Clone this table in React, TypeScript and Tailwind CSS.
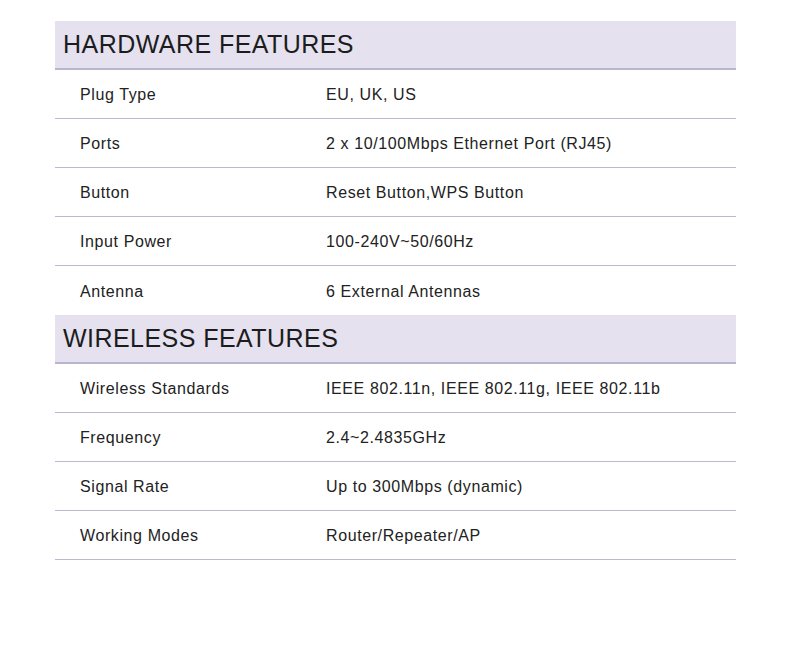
type Row = { label: string; value: string };

const sections: { title: string; rows: Row[] }[] = [
  {
    title: "HARDWARE FEATURES",
    rows: [
      { label: "Plug Type", value: "EU, UK, US" },
      { label: "Ports", value: "2 x 10/100Mbps Ethernet Port (RJ45)" },
      { label: "Button", value: "Reset Button,WPS Button" },
      { label: "Input Power", value: "100-240V~50/60Hz" },
      { label: "Antenna", value: "6 External Antennas" },
    ],
  },
  {
    title: "WIRELESS FEATURES",
    rows: [
      { label: "Wireless Standards", value: "IEEE 802.11n, IEEE 802.11g, IEEE 802.11b" },
      { label: "Frequency", value: "2.4~2.4835GHz" },
      { label: "Signal Rate", value: "Up to 300Mbps (dynamic)" },
      { label: "Working Modes", value: "Router/Repeater/AP" },
    ],
  },
];

export default function App() {
  return (
    <main
      className="min-h-[650px] w-[792px] bg-white pt-[21px] text-[#222]"
      style={{ fontFamily: '"Liberation Sans", Arial, sans-serif' }}
    >
      <div className="ml-[55px] w-[681px]">
        {sections.map((s, si) => (
          <section key={s.title}>
            <div className="flex h-[49px] items-center border-b-2 border-[#b9b5cf] bg-[#e5e1ef] pl-[8px]">
              <h2 className="text-[25px] leading-none tracking-[0.45px] text-[#1c1c1c]">
                {s.title}
              </h2>
            </div>
            {s.rows.map((r, i) => {
              const last = i === s.rows.length - 1;
              const line = !last || si === sections.length - 1;
              return (
                <div
                  key={r.label}
                  className={
                    "flex h-[49px] items-center pt-[2px] text-[16px] tracking-[0.6px] " +
                    (line ? "border-b border-[#bcb8d2]" : "")
                  }
                >
                  <span className="w-[271px] pl-[25px]">{r.label}</span>
                  <span>{r.value}</span>
                </div>
              );
            })}
          </section>
        ))}
      </div>
    </main>
  );
}
